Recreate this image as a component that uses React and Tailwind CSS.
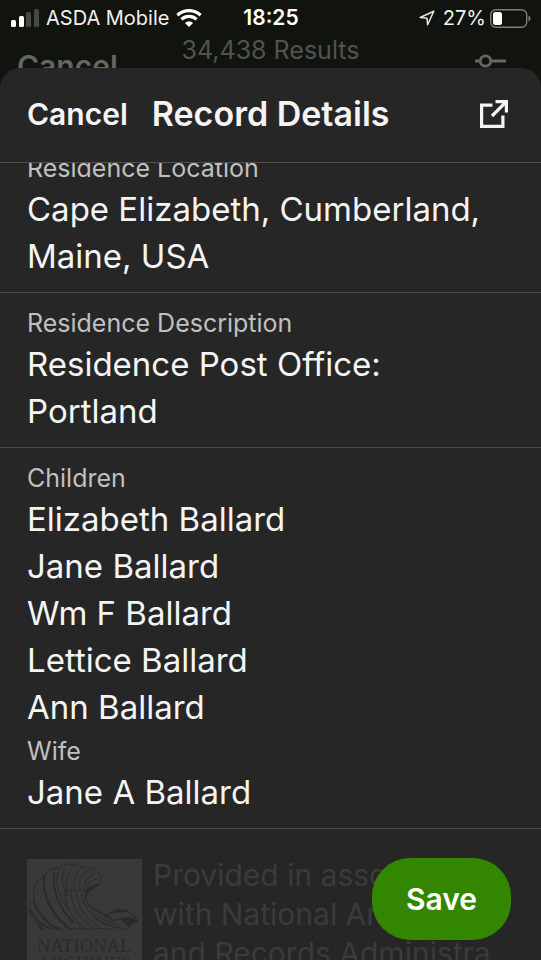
const records = [
  {
    groups: [
      { label: "Residence Location", values: ["Cape Elizabeth, Cumberland, Maine, USA"] },
    ],
  },
  {
    groups: [
      { label: "Residence Description", values: ["Residence Post Office: Portland"] },
    ],
  },
  {
    groups: [
      {
        label: "Children",
        values: ["Elizabeth Ballard", "Jane Ballard", "Wm F Ballard", "Lettice Ballard", "Ann Ballard"],
      },
      { label: "Wife", values: ["Jane A Ballard"] },
    ],
  },
];

const attribution = ["Provided in association", "with National Archives", "and Records Administra"];

function SignalIcon() {
  return (
    <svg className="h-[18px] w-[28px] shrink-0" viewBox="0 0 28 18" aria-label="Signal strength">
      <rect x="0" y="11" width="5" height="7" rx="1.5" fill="#fff" />
      <rect x="8" y="7" width="5" height="11" rx="1.5" fill="#fff" />
      <rect x="15" y="3" width="5" height="15" rx="1.5" fill="#464844" />
      <rect x="23" y="0" width="5" height="18" rx="1.5" fill="#464844" />
    </svg>
  );
}

function WifiIcon() {
  return (
    <svg className="h-[18px] w-[26px] shrink-0" viewBox="0 0 26 18" fill="none" stroke="#fff" aria-label="Wi-Fi">
      <path d="M1.4 6.2A17 17 0 0 1 24.6 6.2" strokeWidth="3.3" />
      <path d="M5.4 10.4A11 11 0 0 1 20.6 10.4" strokeWidth="3.2" />
      <path d="M13 18 8.9 13.9A6 6 0 0 1 17.1 13.9Z" fill="#fff" stroke="none" />
    </svg>
  );
}

function LocationIcon() {
  return (
    <svg className="h-4 w-4" viewBox="0 0 16 16" fill="none" stroke="#e8e8e8" strokeWidth="1.5" strokeLinejoin="round" aria-label="Location">
      <path d="M14.8 1.2 1.2 7.5 8 8.2 8.6 14.8Z" />
    </svg>
  );
}

function BatteryIcon() {
  return (
    <svg className="h-[19px] w-[41px]" viewBox="0 0 41 19" aria-label="Battery 27%">
      <rect x="0.7" y="0.7" width="36" height="17.6" rx="5" fill="none" stroke="#7c7e7a" strokeWidth="1.4" />
      <rect x="3" y="3" width="9" height="13" rx="2.5" fill="#fff" />
      <path d="M38.5 6.5Q40.5 7.5 40.5 9.5T38.5 12.5Z" fill="#7c7e7a" />
    </svg>
  );
}

function FilterIcon() {
  return (
    <svg className="mr-[18px] h-[14px] w-[31px]" viewBox="0 0 31 14" fill="none" stroke="#646762" strokeWidth="2.8" aria-hidden="true">
      <path d="M0 7H5M16 7H31" />
      <circle cx="10.5" cy="7" r="5.2" />
    </svg>
  );
}

function OpenIcon() {
  return (
    <svg className="h-7 w-7" viewBox="0 0 28 28" fill="none" stroke="#f4f4f4" strokeWidth="3.2" aria-hidden="true">
      <path d="M12.5 5.1H1.6V26.4H22.9V15.5" />
      <path d="M15.5 1.6H26.4V12.5M25.8 2.2 12 16" />
    </svg>
  );
}

function EagleLogo() {
  return (
    <svg className="h-[74px] w-full" viewBox="0 0 115 74" fill="none" stroke="#2a2a2a" strokeLinecap="round" aria-hidden="true">
      <g strokeWidth="1">
        <path d="M7 41C1 43 1 51 5 58C8 64 12 67 14 71M7 41C5 30 9 20 17 18M17 18C19 11 27 8 33 9M33 9C39 4 48 4 55 8C64 7 73 12 74 20C74 24 72 26 70 28" />
        <path d="M33 9C27 20 30 36 42 51M39 8C33 17 35 27 41 37M48 6C40 13 38 21 40 31M55 8C48 13 46 21 47 30M62 11C55 15 52 21 52 30M67 15C60 18 57 24 57 30M71 20C66 20 62 23 60 28" />
        <path d="M38 32C41 30 44 33 46 31C49 30 51 33 53 31C56 30 57 33 59 32" />
        <path d="M38 33C38 48 46 61 58 70M44 33C44 47 53 60 66 69M50 33C49 47 59 60 73 69M55 34C54 47 65 58 80 67" />
        <path d="M60 45C66 52 76 56 87 62M60 50C67 57 77 61 90 66M68 60C75 64 83 67 92 69" />
        <path d="M45 70C52 67 59 72 66 70C73 68 79 72 86 69C91 67 95 71 99 70" />
      </g>
      <g strokeWidth="1.8">
        <path d="M7 41C9 54 19 63 31 71M17 18C15 36 25 54 41 69M18 31C19 44 25 54 34 62M4 52C8 60 16 67 24 70M27 14C25 30 31 48 46 63" />
        <path d="M12 66 16 71M28 68 36 71M38 67 45 71" />
      </g>
      <path d="M72 25C67 27 61 30 59 36C57 42 62 47 70 51C75 54 80 56 85 60" strokeWidth="1.2" />
      <path d="M71 26C63 26 57 30 58 40C60 33 65 30 71 26Z" fill="#2a2a2a" />
      <path d="M79 58C82 53 89 51 96 52C103 52 109 57 111 63C108 60 104 59 99 59C93 59 90 62 84 62" strokeWidth="1.2" />
      <path d="M82 54C89 50 97 50 102 52L92 53Z" fill="#2a2a2a" />
      <path d="M95 60C101 58 107 59 110 61L102 68L100 65L96 62Z" fill="#2a2a2a" />
    </svg>
  );
}

function StatusBar() {
  return (
    <div className="flex h-9 items-center justify-between pr-[10px] pl-[11px] text-[20px] leading-6 text-[#f0f0f0]">
      <div className="flex flex-1 items-center gap-[7px]">
        <SignalIcon />
        <span>ASDA Mobile</span>
        <WifiIcon />
      </div>
      <time className="text-[21px] font-semibold text-white">18:25</time>
      <div className="flex flex-1 items-center justify-end">
        <LocationIcon />
        <span className="mr-1 ml-2">27%</span>
        <BatteryIcon />
      </div>
    </div>
  );
}

function RecordGroup({ label, values }) {
  return (
    <dl>
      <dt className="text-[25px] leading-[35px] text-[#c0c0c0]">{label}</dt>
      {values.map((value) => (
        <dd key={value} className="text-[33px] leading-[47px] text-[#f4f4f4]">
          {value}
        </dd>
      ))}
    </dl>
  );
}

export default function App() {
  return (
    <div className="relative flex h-screen flex-col overflow-hidden bg-[#10130e] font-['Inter',sans-serif]">
      <StatusBar />
      <div className="flex h-8 shrink-0 items-start overflow-hidden px-[17px]">
        <span className="mt-[14px] flex-1 text-[30px] leading-8 font-semibold text-[#646762]">Cancel</span>
        <p className="text-[25px] leading-[29px] text-[#51534f]">34,438 Results</p>
        <div className="mt-[18px] flex flex-1 justify-end">
          <FilterIcon />
        </div>
      </div>

      <main className="flex min-h-0 flex-1 flex-col overflow-hidden rounded-t-[20px] bg-[#262626]">
        <header className="flex h-[95px] shrink-0 items-center border-b border-[#505050] pr-[33px] pb-[2px] pl-[27px] text-[#f4f4f4]">
          <button type="button" className="text-[30px] leading-10 font-semibold">Cancel</button>
          <h1 className="ml-6 flex-1 text-[34px] leading-10 font-semibold">Record Details</h1>
          <button type="button" aria-label="Open record">
            <OpenIcon />
          </button>
        </header>

        <div className="min-h-0 flex-1 overflow-hidden">
          <div className="-mt-[25px]">
            {records.map((section) => (
              <section
                key={section.groups[0].label}
                className="flex flex-col gap-[3px] border-b border-[#484848] px-[27px] pt-[13px] pb-3"
              >
                {section.groups.map((group) => (
                  <RecordGroup key={group.label} {...group} />
                ))}
              </section>
            ))}
          </div>
          <footer className="flex gap-[11px] px-[27px] pt-[30px]">
            <div className="w-[115px] shrink-0 bg-[#393939] text-center font-['Liberation_Serif',serif] text-[18px] leading-[18px] tracking-wide text-[#2a2a2a]">
              <EagleLogo />
              <p className="pt-1">NATIONAL</p>
              <p>ARCHIVES</p>
            </div>
            <p className="-mt-[3px] text-[30px] leading-[39px] whitespace-nowrap text-[#3b3b3b]">
              {attribution.map((line) => (
                <span key={line} className="block">{line}</span>
              ))}
            </p>
          </footer>
        </div>
      </main>

      <button
        type="button"
        className="absolute right-[30px] bottom-5 h-[82px] w-[139px] rounded-[38px] bg-[#338700] text-[30px] font-semibold text-white"
      >
        Save
      </button>
    </div>
  );
}
